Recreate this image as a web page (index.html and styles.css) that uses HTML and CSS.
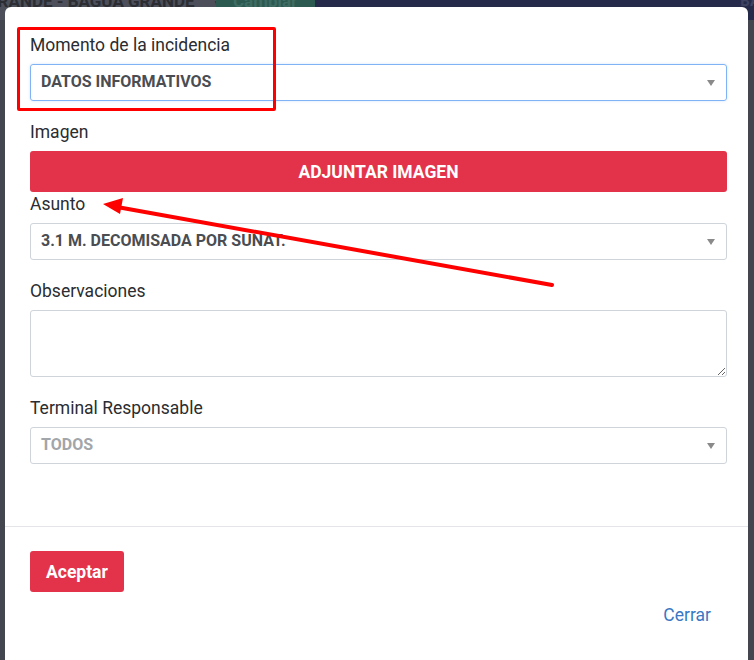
FILE: index.html
```html
<!DOCTYPE html>
<html lang="es">
<head>
<meta charset="utf-8">
<link rel="stylesheet" href="styles.css">
<title>Incidencia</title>
</head>
<body>
<div class="page">
  <div class="topbar">
    <div class="tb-select"><div class="tb-text">GRANDE - BAGUA GRANDE <span class="tb-caret">▼</span></div></div>
    <div class="tb-btn"><div class="tb-text">Cambiar</div></div>
    <div class="tb-nav"><div class="tb-text tb-ba">BA</div></div>
  </div>
  <div class="backdrop"></div>
</div>

<div class="modal">
  <div class="modal-body">
    <div class="group">
      <label class="lbl">Momento de la incidencia</label>
      <div class="select focus"><span class="val">DATOS INFORMATIVOS</span><span class="caret"></span></div>
    </div>
    <div class="group tight">
      <label class="lbl">Imagen</label>
      <button class="btn-danger block">ADJUNTAR IMAGEN</button>
    </div>
    <div class="group">
      <label class="lbl">Asunto</label>
      <div class="select"><span class="val">3.1 M. DECOMISADA POR SUNAT.</span><span class="caret"></span></div>
    </div>
    <div class="group">
      <label class="lbl">Observaciones</label>
      <textarea class="textarea"></textarea>
    </div>
    <div class="group">
      <label class="lbl">Terminal Responsable</label>
      <div class="select"><span class="val muted">TODOS</span><span class="caret"></span></div>
    </div>
  </div>
  <div class="modal-footer">
    <button class="btn-danger">Aceptar</button>
    <div class="close-row"><a class="link">Cerrar</a></div>
  </div>

  <div class="annot-box"></div>
  <svg class="annot-arrow" width="743" height="660" viewBox="0 0 743 660">
    <line x1="547" y1="278" x2="112" y2="200" stroke="#ff0000" stroke-width="4" stroke-linecap="round"/>
    <polygon points="98,197 118,191 115,207" fill="#ff0000"/>
  </svg>
</div>
</body>
</html>
```

FILE: styles.css
```css
* { box-sizing: border-box; }
html, body { margin: 0; padding: 0; }
body {
  width: 754px;
  height: 660px;
  overflow: hidden;
  font-family: Roboto, "Liberation Sans", sans-serif;
  background: #43464e;
  position: relative;
}
.page { width: 754px; height: 660px; display: flex; flex-direction: column; }
.topbar { display: flex; height: 20px; }
.tb-text {
  font-weight: 700;
  font-size: 17px;
  line-height: 20px;
  margin-top: -9px;
  white-space: nowrap;
}
.tb-select {
  width: 216px;
  background: #4d505a;
  color: #2b2d33;
  overflow: hidden;
}
.tb-select .tb-text { margin-left: -14px; }
.tb-caret { font-size: 10px; margin-left: 14px; color: #2b2d33; }
.tb-btn {
  width: 99px;
  background: #2d5a50;
  color: #3f6c63;
  padding-left: 17px;
  overflow: hidden;
}
.tb-nav { flex: 1; background: #252a4a; overflow: hidden; display: flex; justify-content: flex-end; }
.tb-ba { color: #3d4260; font-size: 15px; margin-right: -6px; }
.backdrop { flex: 1; background: #43464e; }

.modal {
  position: absolute;
  left: 5px;
  top: 7px;
  width: 743px;
  height: 670px;
  background: #fff;
  border-radius: 6px;
  display: flex;
  flex-direction: column;
}
.modal-body { padding: 26px 21px 0 25px; height: 520px; border-bottom: 1px solid #e3e5e8; }
.group { margin-bottom: 19px; display: flex; flex-direction: column; }
.group.tight { margin-bottom: 0; }
.lbl { font-size: 17.5px; line-height: 24px; color: #2a2d31; margin-bottom: 7px; }
.select {
  height: 37px;
  border: 1px solid #ced4da;
  border-radius: 3px;
  display: flex;
  align-items: center;
  padding: 0 11px 3px 10px;
  justify-content: space-between;
}
.select.focus { border-color: #80b3f5; box-shadow: 0 0 3px rgba(128,179,245,0.35); }
.val { font-size: 16px; font-weight: 700; color: #4a4d52; }
.val.muted { color: #a2a5a9; }
.caret {
  width: 0; height: 0;
  border-left: 4.5px solid transparent;
  border-right: 4.5px solid transparent;
  border-top: 6px solid #8a8a8a;
  margin-top: 3px;
}
.btn-danger {
  background: #e3334a;
  color: #fff;
  border: none;
  border-radius: 3px;
  font-family: Roboto, "Liberation Sans", sans-serif;
  font-weight: 700;
  font-size: 17.5px;
  height: 41px;
  padding: 0 16px;
}
.btn-danger.block { width: 100%; }
.textarea {
  height: 67px;
  border: 1px solid #ced4da;
  border-radius: 3px;
  resize: vertical;
  font-family: inherit;
}
.modal-footer { padding: 24px 25px 0 25px; display: flex; flex-direction: column; align-items: flex-start; }
.close-row { width: 100%; display: flex; justify-content: flex-end; padding: 11px 12px 0 0; }
.link { color: #3a78c3; font-size: 17.5px; line-height: 24px; }

.annot-box {
  position: absolute;
  left: 12px;
  top: 20px;
  width: 259px;
  height: 84px;
  border: 3px solid #ff0000;
  border-radius: 2px;
}
.annot-arrow { position: absolute; left: 0; top: 0; pointer-events: none; }
```
